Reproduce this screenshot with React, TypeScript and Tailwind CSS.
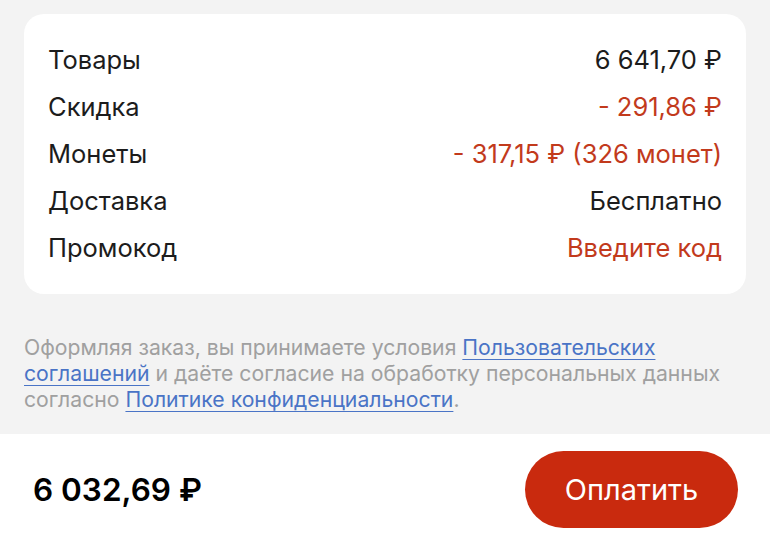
import React from "react";

const rows: { label: string; value: string; red?: boolean }[] = [
  { label: "Товары", value: "6 641,70 ₽" },
  { label: "Скидка", value: "- 291,86 ₽", red: true },
  { label: "Монеты", value: "- 317,15 ₽ (326 монет)", red: true },
  { label: "Доставка", value: "Бесплатно" },
  { label: "Промокод", value: "Введите код", red: true },
];

export default function App() {
  return (
    <div
      className="w-[770px] h-[545px] overflow-hidden flex flex-col bg-white"
      style={{ fontFamily: "Inter, 'Noto Sans', sans-serif" }}
    >
      <div className="bg-[#f3f3f3] px-[24px] pt-[14px] pb-[22px]">
        <div className="bg-white rounded-[20px] px-[24px] pt-[23px] pb-[22px]">
          {rows.map((r) => (
            <div key={r.label} className="h-[47px] flex items-center justify-between text-[25.5px]">
              <span className="text-[#1c1c1c]">{r.label}</span>
              <span className={r.red ? "text-[#c23a1c]" : "text-[#1c1c1c]"}>{r.value}</span>
            </div>
          ))}
        </div>
        <p className="mt-[40px] text-[21.2px] leading-[26px] text-[#a0a0a0]">
          Оформляя заказ, вы принимаете условия{" "}
          <span className="text-[#4a74c6] underline decoration-1 underline-offset-[4px]">Пользовательских соглашений</span>{" "}
          и даёте согласие на обработку персональных данных согласно{" "}
          <span className="text-[#4a74c6] underline decoration-1 underline-offset-[4px]">Политике конфиденциальности</span>.
        </p>
      </div>
      <div className="flex-1 flex items-center justify-between pl-[33px] pr-[32px]">
        <span className="text-[31.5px] font-semibold text-black">6 032,69 ₽</span>
        <button className="w-[213px] h-[77px] rounded-full bg-[#c92a0e] text-white text-[29px]">Оплатить</button>
      </div>
    </div>
  );
}
